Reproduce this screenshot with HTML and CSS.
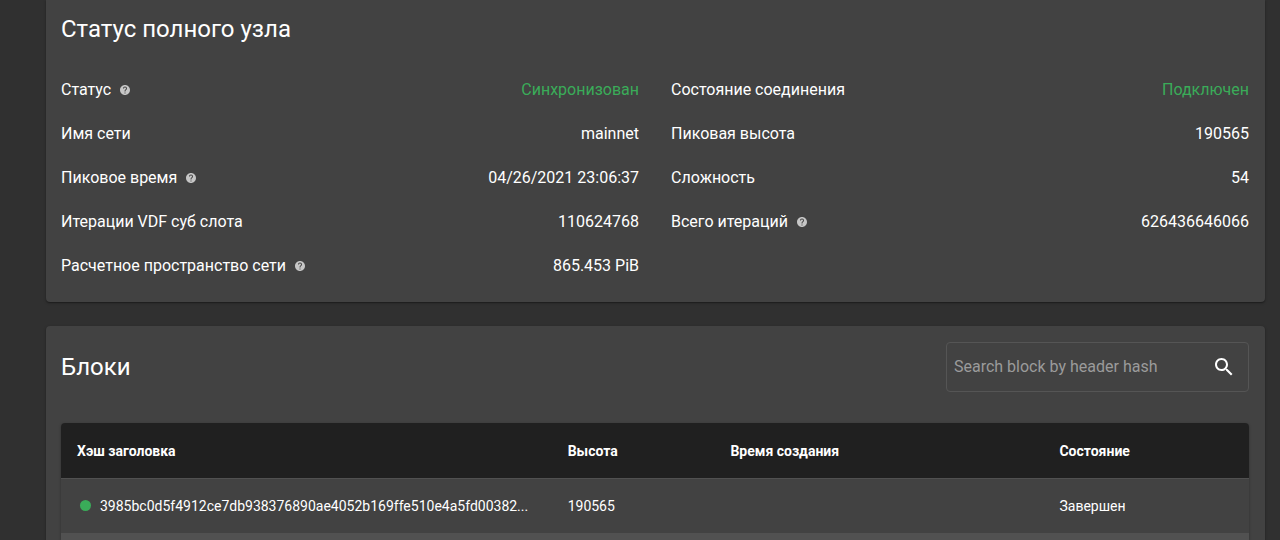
FILE: index.html
```
<!DOCTYPE html>
<html lang="ru">
<head>
	<meta charset="utf-8">
	<title>Статус полного узла</title>
	<link rel="stylesheet" href="styles.css">
</head>
<body>
	<svg class="symbols" aria-hidden="true">
		<symbol id="help" viewBox="0 0 24 24">
			<path d="M12 2C6.48 2 2 6.48 2 12s4.48 10 10 10 10-4.48 10-10S17.52 2 12 2zm1 17h-2v-2h2v2zm2.07-7.75l-.9.92C13.45 12.9 13 13.5 13 15h-2v-.5c0-1.1.45-2.1 1.17-2.83l1.24-1.26c.37-.36.59-.86.59-1.41 0-1.1-.9-2-2-2s-2 .9-2 2H8c0-2.21 1.79-4 4-4s4 1.79 4 4c0 .88-.36 1.68-.93 2.25z"/>
		</symbol>
	</svg>
	<main class="content">
		<section class="card status">
			<h2>Статус полного узла</h2>
			<div class="columns">
				<dl>
					<div class="row">
						<dt>Статус <svg class="help"><use href="#help"/></svg></dt>
						<dd class="green">Синхронизован</dd>
					</div>
					<div class="row">
						<dt>Имя сети</dt>
						<dd>mainnet</dd>
					</div>
					<div class="row">
						<dt>Пиковое время <svg class="help"><use href="#help"/></svg></dt>
						<dd>04/26/2021 23:06:37</dd>
					</div>
					<div class="row">
						<dt>Итерации VDF суб слота</dt>
						<dd>110624768</dd>
					</div>
					<div class="row">
						<dt>Расчетное пространство сети <svg class="help"><use href="#help"/></svg></dt>
						<dd>865.453 PiB</dd>
					</div>
				</dl>
				<dl>
					<div class="row">
						<dt>Состояние соединения</dt>
						<dd class="green">Подключен</dd>
					</div>
					<div class="row">
						<dt>Пиковая высота</dt>
						<dd>190565</dd>
					</div>
					<div class="row">
						<dt>Сложность</dt>
						<dd>54</dd>
					</div>
					<div class="row">
						<dt>Всего итераций <svg class="help"><use href="#help"/></svg></dt>
						<dd>626436646066</dd>
					</div>
				</dl>
			</div>
		</section>

		<section class="card blocks">
			<div class="blocks-header">
				<h2>Блоки</h2>
				<form class="search">
					<input type="text" placeholder="Search block by header hash" aria-label="Search block by header hash">
					<button type="button" aria-label="Search">
						<svg viewBox="0 0 24 24"><path d="M15.5 14h-.79l-.28-.27C15.41 12.59 16 11.11 16 9.5 16 5.91 13.09 3 9.5 3S3 5.91 3 9.5 5.91 16 9.5 16c1.61 0 3.09-.59 4.23-1.57l.27.28v.79l5 4.99L20.49 19l-4.99-5zm-6 0C7.01 14 5 11.99 5 9.5S7.01 5 9.5 5 14 7.01 14 9.5 11.99 14 9.5 14z"/></svg>
					</button>
				</form>
			</div>
			<table>
				<thead>
					<tr>
						<th class="hash">Хэш заголовка</th>
						<th class="height">Высота</th>
						<th class="created">Время создания</th>
						<th>Состояние</th>
					</tr>
				</thead>
				<tbody>
					<tr>
						<td><span class="dot"></span>3985bc0d5f4912ce7db938376890ae4052b169ffe510e4a5fd00382...</td>
						<td>190565</td>
						<td></td>
						<td>Завершен</td>
					</tr>
				</tbody>
				<tfoot>
					<tr>
						<td colspan="4"></td>
					</tr>
				</tfoot>
			</table>
		</section>
	</main>
</body>
</html>
```
FILE: styles.css
```
* {
	box-sizing: border-box;
}
body {
	margin: 0;
	background-color: #303030;
	color: #fff;
	font-family: Roboto, sans-serif;
	font-size: 16px;
	line-height: 24px;
}
.symbols {
	display: none;
}
.content {
	padding: 0 15px 0 46px;
}
.card {
	background-color: #424242;
	border-radius: 4px;
	box-shadow: 0 1px 3px rgba(0, 0, 0, 0.3), 0 1px 1px rgba(0, 0, 0, 0.2);
}
h2 {
	margin: 0;
	font-size: 24px;
	font-weight: 400;
	line-height: 34px;
}

.status {
	padding: 12px 16px 24px 15px;
	border-radius: 0 0 4px 4px;
}
.columns {
	display: grid;
	grid-template-columns: 1fr 1fr;
	gap: 32px;
	margin-top: 32px;
}
dl {
	display: flex;
	flex-direction: column;
	gap: 20px;
	margin: 0;
}
.row {
	display: flex;
	justify-content: space-between;
}
dt {
	display: flex;
	align-items: center;
	gap: 8px;
}
dd {
	margin: 0;
}
.green {
	color: #3aac59;
}
.help {
	width: 12px;
	height: 12px;
	fill: #c6c6c6;
}

.blocks {
	margin-top: 24px;
	padding: 16px 16px 0 15px;
	border-radius: 4px 4px 0 0;
}
.blocks-header {
	display: flex;
	justify-content: space-between;
	align-items: center;
	margin-bottom: 31px;
}
.search {
	display: flex;
	align-items: center;
	width: 303px;
	height: 50px;
	padding: 0 12px 0 7px;
	border: 1px solid #555;
	border-radius: 4px;
}
.search input {
	flex: 1;
	min-width: 0;
	padding: 0;
	border: 0;
	outline: none;
	background: none;
	color: #fff;
	font: inherit;
}
.search input::placeholder {
	color: #9b9b9b;
	opacity: 1;
}
.search button {
	display: flex;
	padding: 0;
	border: 0;
	background: none;
	cursor: pointer;
}
.search svg {
	width: 24px;
	height: 24px;
	fill: #fff;
}

table {
	width: 100%;
	table-layout: fixed;
	border-collapse: separate;
	border-spacing: 0;
	border-radius: 4px 4px 0 0;
	overflow: hidden;
	box-shadow: 0 1px 3px rgba(0, 0, 0, 0.3);
	font-size: 14px;
	line-height: 20px;
}
th, td {
	padding: 0 16px;
	text-align: left;
	white-space: nowrap;
}
th {
	height: 56px;
	border-bottom: 1px solid #515151;
	background-color: #202020;
	font-weight: 700;
}
td {
	height: 54px;
}
.hash {
	width: 41.3%;
}
.height {
	width: 13.7%;
}
.created {
	width: 27.7%;
}
tfoot td {
	height: 7px;
	background-color: #515151;
}
.dot {
	display: inline-block;
	width: 11px;
	height: 11px;
	margin: 0 9px 0 3px;
	border-radius: 50%;
	background-color: #3aac59;
}
```
